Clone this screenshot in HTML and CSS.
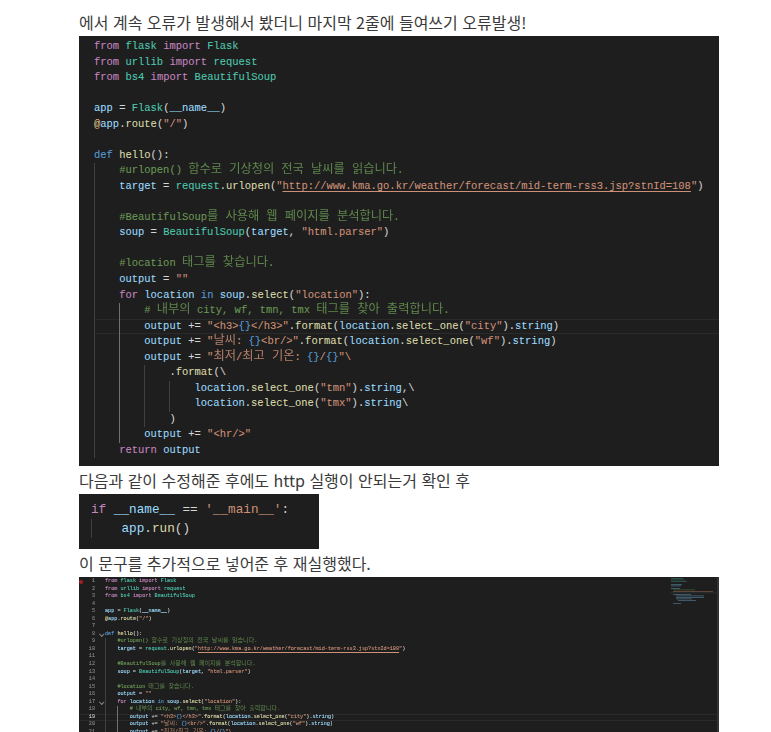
FILE: index.html
```html
<!DOCTYPE html>
<html lang="ko">
<head>
<meta charset="utf-8">
<title>들여쓰기 오류</title>
<link rel="stylesheet" href="styles.css">
</head>
<body>
<main class="post">
<p>에서 계속 오류가 발생해서 봤더니 마지막 2줄에 들여쓰기 오류발생!</p>
<div class="code large">
<div class="ln"><i class="k">from</i> <i class="t">flask</i> <i class="k">import</i> <i class="t">Flask</i></div>
<div class="ln"><i class="k">from</i> <i class="t">urllib</i> <i class="k">import</i> <i class="t">request</i></div>
<div class="ln"><i class="k">from</i> <i class="t">bs4</i> <i class="k">import</i> <i class="t">BeautifulSoup</i></div>
<div class="ln"></div>
<div class="ln"><i class="v">app</i> = <i class="t">Flask</i>(<i class="v">__name__</i>)</div>
<div class="ln"><i class="d">@</i><i class="v">app</i>.<i class="f">route</i>(<i class="s">"/"</i>)</div>
<div class="ln"></div>
<div class="ln"><i class="b">def</i> <i class="f">hello</i>():</div>
<div class="ln"><b class="g"></b><i class="c">#urlopen() <span class="ko">함수로 기상청의 전국 날씨를 읽습니다</span>.</i></div>
<div class="ln"><b class="g"></b><i class="v">target</i> = <i class="t">request</i>.<i class="f">urlopen</i>(<i class="s">"<u>http://www.kma.go.kr/weather/forecast/mid-term-rss3.jsp?stnId=108</u>"</i>)</div>
<div class="ln"><b class="g"></b></div>
<div class="ln"><b class="g"></b><i class="c">#BeautifulSoup<span class="ko">를 사용해 웹 페이지를 분석합니다</span>.</i></div>
<div class="ln"><b class="g"></b><i class="v">soup</i> = <i class="t">BeautifulSoup</i>(<i class="v">target</i>, <i class="s">"html.parser"</i>)</div>
<div class="ln"><b class="g"></b></div>
<div class="ln"><b class="g"></b><i class="c">#location <span class="ko">태그를 찾습니다</span>.</i></div>
<div class="ln"><b class="g"></b><i class="v">output</i> = <i class="s">""</i></div>
<div class="ln"><b class="g"></b><i class="k">for</i> <i class="v">location</i> <i class="b">in</i> <i class="v">soup</i>.<i class="f">select</i>(<i class="s">"location"</i>):</div>
<div class="ln"><b class="g"></b><b class="g on"></b><i class="c"># <span class="ko">내부의</span> city, wf, tmn, tmx <span class="ko">태그를 찾아 출력합니다</span>.</i></div>
<div class="ln cur"><b class="g"></b><b class="g on"></b><i class="v">output</i> += <i class="s">"&lt;h3&gt;<i class="b">{}</i>&lt;/h3&gt;"</i>.<i class="f">format</i>(<i class="v">location</i>.<i class="f">select_one</i>(<i class="s">"city"</i>).<i class="v">string</i>)</div>
<div class="ln"><b class="g"></b><b class="g on"></b><i class="v">output</i> += <i class="s">"<span class="ko">날씨</span>: <i class="b">{}</i>&lt;br/&gt;"</i>.<i class="f">format</i>(<i class="v">location</i>.<i class="f">select_one</i>(<i class="s">"wf"</i>).<i class="v">string</i>)</div>
<div class="ln"><b class="g"></b><b class="g on"></b><i class="v">output</i> += <i class="s">"<span class="ko">최저</span>/<span class="ko">최고 기온</span>: <i class="b">{}</i>/<i class="b">{}</i>"\</i></div>
<div class="ln"><b class="g"></b><b class="g on"></b><b class="g"></b>.<i class="f">format</i>(\</div>
<div class="ln"><b class="g"></b><b class="g on"></b><b class="g"></b><b class="g"></b><i class="v">location</i>.<i class="f">select_one</i>(<i class="s">"tmn"</i>).<i class="v">string</i>,\</div>
<div class="ln"><b class="g"></b><b class="g on"></b><b class="g"></b><b class="g"></b><i class="v">location</i>.<i class="f">select_one</i>(<i class="s">"tmx"</i>).<i class="v">string</i>\</div>
<div class="ln"><b class="g"></b><b class="g on"></b><b class="g"></b>)</div>
<div class="ln"><b class="g"></b><b class="g on"></b><i class="v">output</i> += <i class="s">"&lt;hr/&gt;"</i></div>
<div class="ln"><b class="g"></b><i class="k">return</i> <i class="v">output</i></div>
</div>
<p>다음과 같이 수정해준 후에도 http 실행이 안되는거 확인 후</p>
<div class="code small">
<div class="ln"><i class="k">if</i> <i class="v">__name__</i> == <i class="s">'__main__'</i>:</div>
<div class="ln"><b class="g"></b><i class="v">app</i>.<i class="f">run</i>()</div>
</div>
<p>이 문구를 추가적으로 넣어준 후 재실행했다.</p>
<div class="code shot">
<svg class="minimap" width="47" height="30" viewBox="0 0 47 30" aria-hidden="true">
<rect x="0" y="15" width="47" height="1.4" fill="#26292b"/>
<g fill="#2f5a52"><rect x="1" y="1" width="12" height=".8"/><rect x="1" y="2.5" width="14" height=".8"/><rect x="1" y="4" width="16" height=".8"/></g>
<g fill="#466a7c"><rect x="1" y="7" width="11" height=".8"/><rect x="1" y="8.5" width="10" height=".8"/><rect x="1" y="11" width="9" height=".8"/></g>
<rect x="3" y="12.5" width="22" height=".8" fill="#3c5a35"/>
<rect x="3" y="14" width="40" height=".8" fill="#6d5140"/>
<g fill="#466a7c"><rect x="3" y="17" width="18" height=".8"/><rect x="6" y="18.5" width="28" height=".8"/><rect x="6" y="20" width="28" height=".8"/><rect x="6" y="21.5" width="16" height=".8"/><rect x="8" y="23" width="18" height=".8"/><rect x="3" y="26" width="8" height=".8"/></g>
</svg>
<div class="bar"></div>
<div class="ln"><em class="n"><s class="dot"></s>1</em><i class="k">from</i> <i class="t">flask</i> <i class="k">import</i> <i class="t">Flask</i></div>
<div class="ln"><em class="n">2</em><i class="k">from</i> <i class="t">urllib</i> <i class="k">import</i> <i class="t">request</i></div>
<div class="ln"><em class="n">3</em><i class="k">from</i> <i class="t">bs4</i> <i class="k">import</i> <i class="t">BeautifulSoup</i></div>
<div class="ln"><em class="n">4</em></div>
<div class="ln"><em class="n">5</em><i class="v">app</i> = <i class="t">Flask</i>(<i class="v">__name__</i>)</div>
<div class="ln"><em class="n">6</em><i class="d">@</i><i class="v">app</i>.<i class="f">route</i>(<i class="s">"/"</i>)</div>
<div class="ln"><em class="n">7</em></div>
<div class="ln"><em class="n fold">8</em><i class="b">def</i> <i class="f">hello</i>():</div>
<div class="ln"><em class="n">9</em><b class="g"></b><i class="c">#urlopen() <span class="ko">함수로 기상청의 전국 날씨를 읽습니다</span>.</i></div>
<div class="ln"><em class="n">10</em><b class="g"></b><i class="v">target</i> = <i class="t">request</i>.<i class="f">urlopen</i>(<i class="s">"<u>http://www.kma.go.kr/weather/forecast/mid-term-rss3.jsp?stnId=108</u>"</i>)</div>
<div class="ln"><em class="n">11</em><b class="g"></b></div>
<div class="ln"><em class="n">12</em><b class="g"></b><i class="c">#BeautifulSoup<span class="ko">를 사용해 웹 페이지를 분석합니다</span>.</i></div>
<div class="ln"><em class="n">13</em><b class="g"></b><i class="v">soup</i> = <i class="t">BeautifulSoup</i>(<i class="v">target</i>, <i class="s">"html.parser"</i>)</div>
<div class="ln"><em class="n">14</em><b class="g"></b></div>
<div class="ln"><em class="n">15</em><b class="g"></b><i class="c">#location <span class="ko">태그를 찾습니다</span>.</i></div>
<div class="ln"><em class="n">16</em><b class="g"></b><i class="v">output</i> = <i class="s">""</i></div>
<div class="ln"><em class="n fold">17</em><b class="g"></b><i class="k">for</i> <i class="v">location</i> <i class="b">in</i> <i class="v">soup</i>.<i class="f">select</i>(<i class="s">"location"</i>):</div>
<div class="ln"><em class="n">18</em><b class="g"></b><b class="g on"></b><i class="c"># <span class="ko">내부의</span> city, wf, tmn, tmx <span class="ko">태그를 찾아 출력합니다</span>.</i></div>
<div class="ln cur"><em class="n now">19</em><b class="g"></b><b class="g on"></b><i class="v">output</i> += <i class="s">"&lt;h3&gt;<i class="b">{}</i>&lt;/h3&gt;"</i>.<i class="f">format</i>(<i class="v">location</i>.<i class="f">select_one</i>(<i class="s">"city"</i>).<i class="v">string</i>)</div>
<div class="ln"><em class="n">20</em><b class="g"></b><b class="g on"></b><i class="v">output</i> += <i class="s">"<span class="ko">날씨</span>: <i class="b">{}</i>&lt;br/&gt;"</i>.<i class="f">format</i>(<i class="v">location</i>.<i class="f">select_one</i>(<i class="s">"wf"</i>).<i class="v">string</i>)</div>
<div class="ln"><em class="n">21</em><b class="g"></b><b class="g on"></b><i class="v">output</i> += <i class="s">"<span class="ko">최저</span>/<span class="ko">최고 기온</span>: <i class="b">{}</i>/<i class="b">{}</i>"\</i></div>
</div>
</main>
</body>
</html>
```
FILE: styles.css
```css
* { box-sizing: border-box; }
html, body { margin: 0; padding: 0; background: #fff; }
body { height: 100vh; overflow: hidden; }
.post {
  width: 640px;
  margin-left: 79px;
  padding-top: 8px;
  font-family: "Noto Sans CJK KR", "Noto Sans", sans-serif;
  font-size: 16px;
  color: #3a3a3a;
}
.post p { margin: 0; height: 28px; line-height: 28px; white-space: nowrap; }
.code {
  position: relative;
  background: #1e1e1e;
  color: #d4d4d4;
  font-family: "Liberation Mono", monospace;
}
.ln { display: block; height: var(--lh); line-height: var(--lh); white-space: pre; }
.large { --lh: 15.54px; font-size: 10.48px; height: 430px; padding: 3px 0 0 15px; overflow: hidden; -webkit-text-stroke: 0.08px; }
.small { --lh: 19px; font-size: 12.7px; width: 240px; height: 55px; padding: 5.5px 0 0 12px; }
.shot { --lh: 7.56px; font-size: 5.17px; height: 180px; padding-top: 1px; overflow: hidden; filter: blur(0.45px); -webkit-text-stroke: 0.1px; }
.code i { font-style: normal; }
.code u { text-underline-offset: 1.5px; }
.ko {
  font-family: "Noto Sans CJK KR", sans-serif;
  font-size: 1.17em;
  line-height: 0;
  word-spacing: 0.3em;
  opacity: 0.85;
  -webkit-text-stroke: 0;
}
.k { color: #c586c0; }
.t { color: #4ec9b0; }
.v { color: #9cdcfe; }
.f { color: #dcdcaa; }
.s { color: #ce9178; }
.c { color: #6a9955; }
.d { color: #d7ba7d; }
.code .b { color: #569cd6; }
.g {
  display: inline-block;
  width: 4ch;
  height: var(--lh);
  vertical-align: top;
  border-left: 1px solid #404040;
}
.g.on { border-left-color: #707070; }
.cur { box-shadow: inset 0 1px 0 #2a2a2a, inset 0 -1px 0 #2a2a2a; }
.n {
  position: relative;
  display: inline-block;
  width: 26px;
  padding-right: 10px;
  text-align: right;
  font-style: normal;
  color: #858585;
}
.n.now { color: #c6c6c6; }
.n.fold::after {
  content: "";
  position: absolute;
  right: 2px;
  top: 1.5px;
  width: 2.5px;
  height: 2.5px;
  border-right: 0.6px solid #8a8a8a;
  border-bottom: 0.6px solid #8a8a8a;
  transform: rotate(45deg);
}
.dot {
  position: absolute;
  left: 0;
  top: 2px;
  width: 4px;
  height: 4px;
  border-radius: 50%;
  background: #a82020;
}
.minimap { position: absolute; top: 0; right: 2px; width: 47px; height: 30px; }
.bar { position: absolute; top: 0; right: 0; width: 2px; height: 100%; background: #333; }
```
